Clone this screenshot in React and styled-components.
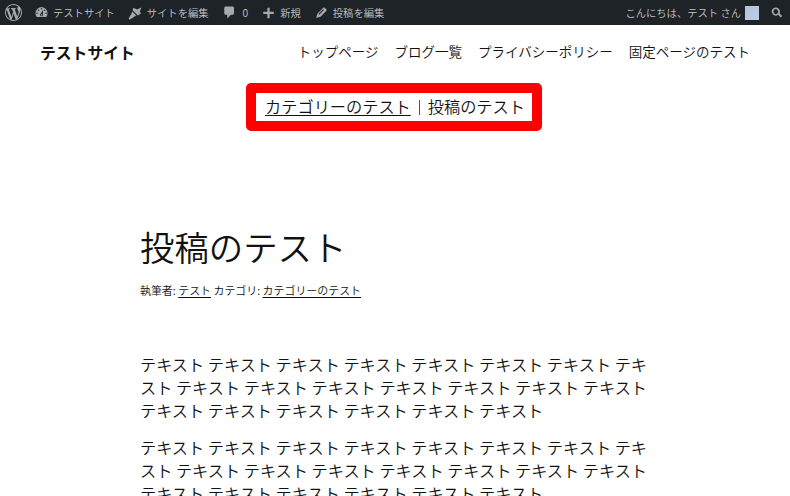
import React from 'react'
import styled, { createGlobalStyle } from 'styled-components'

const Global = createGlobalStyle`
  html, body {
    margin: 0;
    padding: 0;
    background: #fff;
    overflow: hidden;
    font-family: "Noto Sans CJK JP", "Liberation Sans", sans-serif;
    font-weight: 350;
    color: #111;
  }
`

const Page = styled.div`
  width: 790px;
  height: 496px;
  overflow: hidden;
`

const AdminBar = styled.div`
  height: 25px;
  background: #1d2327;
  color: #c3c4c7;
  display: flex;
  justify-content: space-between;
  align-items: center;
  font-size: 10.3px;
`

const AdminGroup = styled.div`
  display: flex;
  align-items: center;
`

const AdminItem = styled.span`
  display: flex;
  align-items: center;
  gap: ${p => p.$gap || 5}px;
  margin-left: ${p => p.$left || 0}px;
  margin-right: ${p => p.$right || 0}px;
  white-space: nowrap;
`

const Icon = styled.svg`
  fill: #a7aaad;
  flex: none;
`

const Avatar = styled.span`
  width: 14px;
  height: 14px;
  background: linear-gradient(135deg, #b4c4dc, #bccde2);
  margin-left: -1px;
`

const Header = styled.header`
  height: 54px;
  padding: 0 40px 4px;
  display: flex;
  justify-content: space-between;
  align-items: center;
`

const SiteTitle = styled.div`
  font-size: 15.8px;
  font-weight: 700;
`

const Nav = styled.nav`
  display: flex;
  gap: 16px;
  font-size: 13.5px;
  margin-bottom: 2px;
`

const CrumbWrap = styled.div`
  display: flex;
  justify-content: center;
  padding-right: 2px;
`

const Crumbs = styled.div`
  border: 10px solid #f00;
  border-radius: 5px;
  padding: 0 7px 2px 9px;
  height: 26px;
  display: flex;
  align-items: center;
  font-size: 16.2px;
  line-height: 26px;
`

const CrumbLink = styled.a`
  text-decoration: underline;
  text-underline-offset: 2px;
`

const Sep = styled.span`
  width: 1px;
  height: 15px;
  background: #555;
  margin: 2px 8px 0;
`

const Article = styled.article`
  width: 512px;
  margin: 91px 0 0 140px;
`

const Title = styled.h1`
  font-size: 34.4px;
  font-weight: 350;
  line-height: 48px;
  margin: 0;
`

const Meta = styled.div`
  font-size: 10.95px;
  line-height: 16px;
  margin-top: 12px;
  margin-bottom: 55px;
`

const MetaLink = styled.a`
  text-decoration: underline;
  text-underline-offset: 2px;
`

const Para = styled.p`
  font-size: 16.18px;
  line-height: 23px;
  margin: 0 0 14px;
  word-break: break-all;
`

const text = Array(21).fill('テキスト').join(' ')

const App = () => (
  <Page>
    <Global />
    <AdminBar>
      <AdminGroup>
        <AdminItem $left={5}>
          <Icon width="17" height="17" viewBox="0 0 20 20">
            <path d="M20 10c0-5.510-4.490-10-10-10C4.480 0 0 4.490 0 10c0 5.520 4.480 10 10 10 5.510 0 10-4.480 10-10zM7.780 15.370L4.370 6.220c.550-.020 1.170-.080 1.170-.080.500-.060.440-1.130-.060-1.110 0 0-1.450.110-2.370.110-.180 0-.370 0-.580-.010C4.120 2.690 6.870 1.110 10 1.110c2.330 0 4.450.870 6.050 2.340-.680-.110-1.650.390-1.650 1.580 0 .740.450 1.360.900 2.100.350.610.550 1.360.550 2.460 0 1.490-1.400 5-1.400 5l-3.030-8.370c.540-.020.820-.170.820-.170.500-.050.440-1.250-.060-1.220 0 0-1.440.120-2.380.120-.870 0-2.330-.120-2.330-.120-.500-.030-.560 1.200-.060 1.220l.920.080 1.260 3.410zM17.410 10c.240-.640.740-1.870.430-4.250.700 1.290 1.050 2.710 1.050 4.250 0 3.290-1.730 6.240-4.400 7.780.970-2.590 1.940-5.200 2.920-7.780zM6.100 18.090C3.120 16.650 1.110 13.530 1.110 10c0-1.300.230-2.480.720-3.590C3.250 10.300 4.670 14.200 6.100 18.090zm4.030-6.630l2.580 6.980c-.860.290-1.760.450-2.710.450-.790 0-1.570-.110-2.290-.330.810-2.380 1.620-4.740 2.420-7.100z" />
          </Icon>
        </AdminItem>
        <AdminItem $left={12} $gap={4}>
          <Icon width="15" height="15" viewBox="0 0 20 20">
            <path d="M3.760 16h12.480c1.100-1.370 1.760-3.110 1.760-5 0-4.420-3.580-8-8-8s-8 3.580-8 8c0 1.890.660 3.630 1.760 5zM10 4c.550 0 1 .450 1 1s-.450 1-1 1-1-.450-1-1 .450-1 1-1zM6 6c.550 0 1 .450 1 1s-.450 1-1 1-1-.450-1-1 .450-1 1-1zm8 0c.550 0 1 .450 1 1s-.450 1-1 1-1-.450-1-1 .450-1 1-1zm-5.370 5.550L12 7v6c0 1.100-.900 2-2 2s-2-.900-2-2c0-.570.250-1.080.630-1.450zM4 10c.550 0 1 .450 1 1s-.450 1-1 1-1-.450-1-1 .450-1 1-1zm12 0c.550 0 1 .450 1 1s-.450 1-1 1-1-.450-1-1 .450-1 1-1zm-5 3c0-.550-.450-1-1-1s-1 .450-1 1 .450 1 1 1 1-.450 1-1z" />
          </Icon>
          テストサイト
        </AdminItem>
        <AdminItem $left={12} $gap={4}>
          <Icon width="16" height="16" viewBox="0 0 20 20">
            <path d="M8 3.500L12.500 5.500 18 3 16 8 17.500 10.500 13.500 13 7 6.500zM6.500 8L11.500 13 9.500 14.500 3.500 18.500 2 17 5.500 11z" />
          </Icon>
          サイトを編集
        </AdminItem>
        <AdminItem $left={13} $gap={6}>
          <Icon width="15" height="15" viewBox="0 0 20 20">
            <path d="M5 2h9c1.100 0 2 .900 2 2v7c0 1.100-.900 2-2 2h-2l-5 5v-5H5c-1.100 0-2-.900-2-2V4c0-1.100.900-2 2-2z" />
          </Icon>
          0
        </AdminItem>
        <AdminItem $left={13} $gap={4}>
          <Icon width="15" height="15" viewBox="0 0 20 20">
            <path d="M17 9v3h-5.500v5.500h-3V12H3V9h5.500V3.500h3V9z" />
          </Icon>
          新規
        </AdminItem>
        <AdminItem $left={13} $gap={4}>
          <Icon width="15" height="15" viewBox="0 0 20 20">
            <path d="M13.890 3.390l2.710 2.720c.460.460.420 1.240.030 1.640l-8.010 8.020-5.660 1.420 1.420-5.660 8.020-8.010c.400-.400 1.180-.430 1.640-.030zm-1.700 2.400l-6.300 6.300 1 1 6.300-6.300z" />
          </Icon>
          投稿を編集
        </AdminItem>
      </AdminGroup>
      <AdminGroup>
        <AdminItem>
          こんにちは、テスト さん
          <Avatar />
        </AdminItem>
        <AdminItem $left={10} $right={5}>
          <Icon width="16" height="16" viewBox="0 0 20 20">
            <path d="M12.140 4.780a5 5 0 1 0-.670 7.530l3.220 3.240 1.790-1.780-3.240-3.230a5 5 0 0 0-1.100-5.760zM10.700 10.320a3 3 0 1 1-4.240-4.240 3 3 0 0 1 4.240 4.240z" />
          </Icon>
        </AdminItem>
      </AdminGroup>
    </AdminBar>
    <Header>
      <SiteTitle>テストサイト</SiteTitle>
      <Nav>
        <span>トップページ</span>
        <span>ブログ一覧</span>
        <span>プライバシーポリシー</span>
        <span>固定ページのテスト</span>
      </Nav>
    </Header>
    <CrumbWrap>
      <Crumbs>
        <CrumbLink>カテゴリーのテスト</CrumbLink>
        <Sep />
        <span>投稿のテスト</span>
      </Crumbs>
    </CrumbWrap>
    <Article>
      <Title>投稿のテスト</Title>
      <Meta>
        執筆者: <MetaLink>テスト</MetaLink> カテゴリ: <MetaLink>カテゴリーのテスト</MetaLink>
      </Meta>
      <Para>{text}</Para>
      <Para>{text}</Para>
    </Article>
  </Page>
)

export default App
